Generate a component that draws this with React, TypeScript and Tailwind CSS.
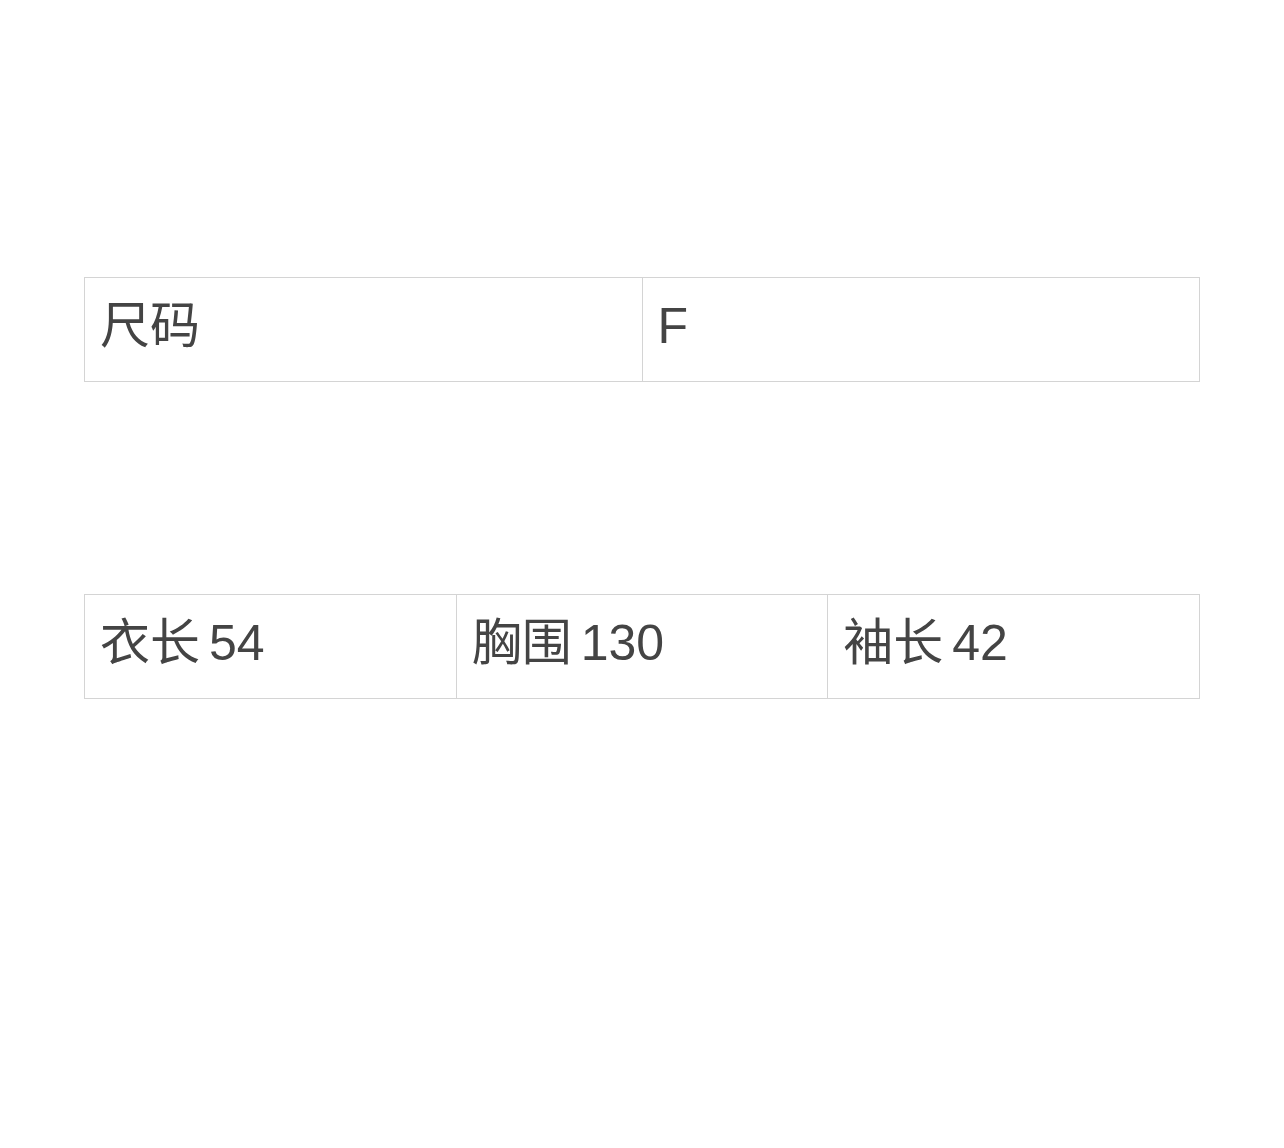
const sizeRow = [
  { label: '尺码' },
  { label: 'F' },
];

const measureRow = [
  { label: '衣长', value: '54' },
  { label: '胸围', value: '130' },
  { label: '袖长', value: '42' },
];

export default function App() {
  return (
    <div
      className="min-h-[1148px] bg-white px-[84px] pt-[277px] text-[#444444]"
      style={{ fontFamily: '"Liberation Sans", "Noto Sans CJK SC", sans-serif' }}
    >
      <table className="w-full table-fixed border-collapse">
        <tbody>
          <tr>
            {sizeRow.map((cell) => (
              <td
                key={cell.label}
                className="border border-[#d4d4d4] pl-[15px] pr-4 pt-[13px] pb-[20px] align-top text-[50px] leading-[70px]"
              >
                {cell.label}
              </td>
            ))}
          </tr>
        </tbody>
      </table>

      <table className="mt-[212px] w-full table-fixed border-collapse">
        <tbody>
          <tr>
            {measureRow.map((cell) => (
              <td
                key={cell.label}
                className="border border-[#d4d4d4] pl-[15px] pr-4 pt-[13px] pb-[20px] align-top text-[50px] leading-[70px]"
              >
                {cell.label}
                <span className="ml-[9px]">{cell.value}</span>
              </td>
            ))}
          </tr>
        </tbody>
      </table>
    </div>
  );
}
